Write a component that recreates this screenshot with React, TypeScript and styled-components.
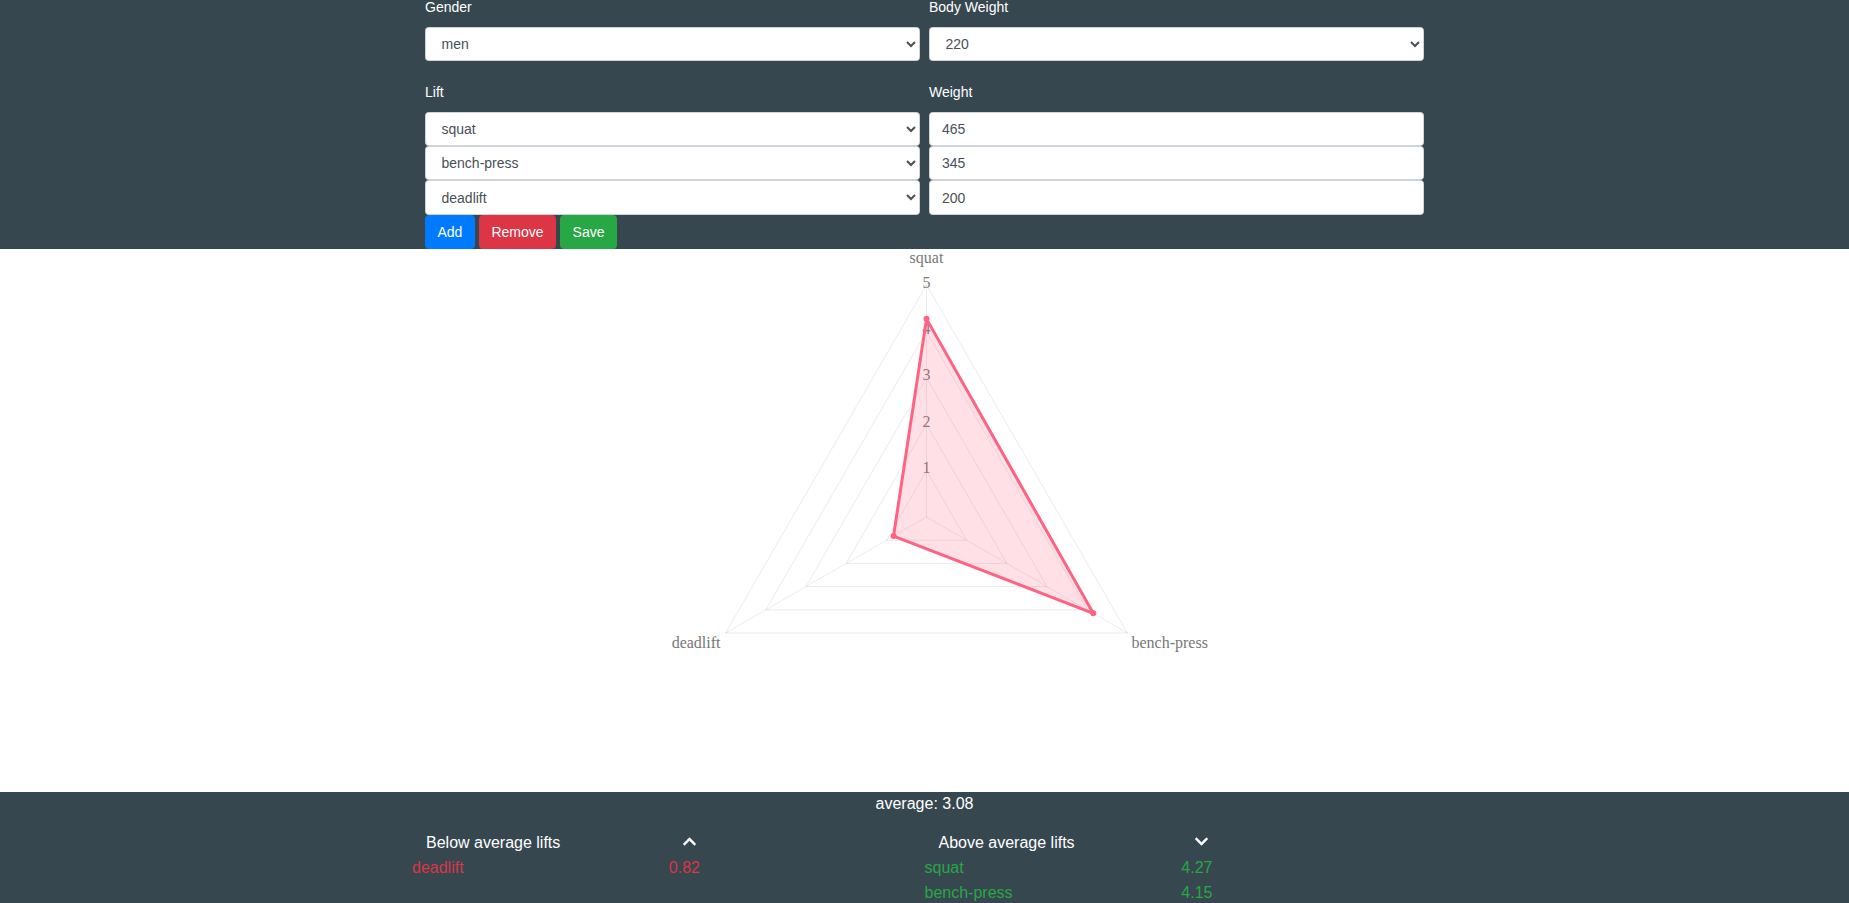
import React from 'react';
import styled, {createGlobalStyle} from 'styled-components';
import {FaChevronUp, FaChevronDown} from 'react-icons/fa';

const LIFTS = [
    {name: 'squat', weight: 465, score: 4.27},
    {name: 'bench-press', weight: 345, score: 4.15},
    {name: 'deadlift', weight: 200, score: 0.82},
];
const AVERAGE = 3.08;

const GlobalStyle = createGlobalStyle`
  html, body {
    margin: 0;
    padding: 0;
    overflow: hidden;
    background: #fff;
  }
  body {
    font-family: "Liberation Sans", Arial, sans-serif;
  }
`;

// radar chart drawn by hand, same look as the chart.js one
const RadarChart: React.FC<{ data: { name: string, score: number }[] }> = ({data}) => {
    const cx = 311.5;
    const cy = 268;
    const r = 232;
    const max = 5;
    const angle = (i: number) => -Math.PI / 2 + (i * 2 * Math.PI) / data.length;
    const at = (i: number, v: number) => {
        const d = (v / max) * r;
        return [cx + Math.cos(angle(i)) * d, cy + Math.sin(angle(i)) * d];
    };
    const ring = (v: number) => data.map((_, i) => at(i, v).join(',')).join(' ');
    const shape = data.map((d, i) => at(i, d.score));

    return (
        <svg width={620} height={543} viewBox="0 0 620 543">
            {[1, 2, 3, 4, 5].map(k => (
                <polygon key={k} points={ring(k)} fill="none" stroke="rgba(0,0,0,0.08)" strokeWidth={1}/>
            ))}
            {data.map((_, i) => {
                const [x, y] = at(i, max);
                return <line key={i} x1={cx} y1={cy} x2={x} y2={y} stroke="rgba(0,0,0,0.08)" strokeWidth={1}/>;
            })}
            {[1, 2, 3, 4, 5].map(k => (
                <text key={k} x={cx} y={cy - (k / max) * r - 3} textAnchor="middle" dominantBaseline="central"
                      fontFamily='"Liberation Serif", serif' fontSize={16} fill="#7a7a7a">{k}</text>
            ))}
            <polygon points={shape.map(p => p.join(',')).join(' ')} fill="rgba(255,99,132,0.2)"
                     stroke="#ff6384" strokeWidth={3} strokeLinejoin="round"/>
            {shape.map(([x, y], i) => <circle key={i} cx={x} cy={y} r={3} fill="#ff6384"/>)}
            <text x={cx} y={cy - r - 28} textAnchor="middle" dominantBaseline="central"
                  fontFamily='"Liberation Serif", serif' fontSize={16} fill="#777">{data[0].name}</text>
            <text x={cx + 205} y={cy + 125.5} textAnchor="start" dominantBaseline="central"
                  fontFamily='"Liberation Serif", serif' fontSize={16} fill="#777">{data[1].name}</text>
            <text x={cx - 206} y={cy + 125.5} textAnchor="end" dominantBaseline="central"
                  fontFamily='"Liberation Serif", serif' fontSize={16} fill="#777">{data[2].name}</text>
        </svg>
    );
}

const App: React.FC = () => {
    const below = LIFTS.filter(l => l.score < AVERAGE);
    const above = LIFTS.filter(l => l.score >= AVERAGE);
    return (
        <>
            <GlobalStyle/>
            <StyledHeader>
                <StyledFormWrapper>
                    <StyledFieldRow $top={-3.5}>
                        <StyledGroup>
                            <StyledLabel>Gender</StyledLabel>
                            <StyledSelect defaultValue="men">
                                <option value="men">men</option>
                                <option value="women">women</option>
                            </StyledSelect>
                        </StyledGroup>
                        <StyledGroup>
                            <StyledLabel>Body Weight</StyledLabel>
                            <StyledSelect defaultValue="220">
                                <option value="220">220</option>
                            </StyledSelect>
                        </StyledGroup>
                    </StyledFieldRow>
                    <StyledFieldRow $top={21}>
                        <StyledGroup>
                            <StyledLabel>Lift</StyledLabel>
                            {LIFTS.map(l => (
                                <StyledSelect key={l.name} defaultValue={l.name}>
                                    {LIFTS.map(o => <option key={o.name} value={o.name}>{o.name}</option>)}
                                </StyledSelect>
                            ))}
                            <StyledButtonBar>
                                <StyledButton $color="#007bff">Add</StyledButton>
                                <StyledButton $color="#dc3545">Remove</StyledButton>
                                <StyledButton $color="#28a745">Save</StyledButton>
                            </StyledButtonBar>
                        </StyledGroup>
                        <StyledGroup>
                            <StyledLabel>Weight</StyledLabel>
                            {LIFTS.map(l => (
                                <StyledInput key={l.name} type="text" defaultValue={l.weight}/>
                            ))}
                        </StyledGroup>
                    </StyledFieldRow>
                </StyledFormWrapper>
            </StyledHeader>

            <StyledChartWrapper>
                <RadarChart data={LIFTS}/>
            </StyledChartWrapper>

            <StyledFooter>
                <StyledAverage>average: {AVERAGE.toFixed(2)}</StyledAverage>
                <StyledLists>
                    <StyledList>
                        <StyledListHeader>
                            <span>Below average lifts</span>
                            <StyledChevron><FaChevronUp size={15}/></StyledChevron>
                        </StyledListHeader>
                        {below.map(l => (
                            <StyledItem key={l.name} $color="#dc3545">
                                <span>{l.name}</span><span>{l.score.toFixed(2)}</span>
                            </StyledItem>
                        ))}
                    </StyledList>
                    <StyledList>
                        <StyledListHeader>
                            <span>Above average lifts</span>
                            <StyledChevron><FaChevronDown size={15}/></StyledChevron>
                        </StyledListHeader>
                        {above.map(l => (
                            <StyledItem key={l.name} $color="#28a745">
                                <span>{l.name}</span><span>{l.score.toFixed(2)}</span>
                            </StyledItem>
                        ))}
                    </StyledList>
                </StyledLists>
            </StyledFooter>
        </>
    );
}

const StyledHeader = styled.div`
  background: #37474f;
  display: grid;
`;

const StyledFormWrapper = styled.form`
  width: 999px;
  margin: 0 auto;
  display: flex;
  flex-direction: column;
`;

const StyledFieldRow = styled.div<{ $top: number }>`
  display: grid;
  grid-template-columns: 1fr 1fr;
  column-gap: 9px;
  margin-top: ${p => p.$top}px;
`;

const StyledGroup = styled.div`
  display: flex;
  flex-direction: column;
`;

const StyledLabel = styled.label`
  font-size: 14px;
  line-height: 21px;
  color: #fff;
  margin-bottom: 9px;
`;

const StyledSelect = styled.select`
  box-sizing: border-box;
  width: 100%;
  height: 34.3px;
  padding: 0 8px 0 11.5px;
  font-family: "Liberation Sans", Arial, sans-serif;
  font-size: 14px;
  color: #495057;
  background: #fff;
  border: 1px solid #ced4da;
  border-radius: 3.5px;
  outline: none;
`;

const StyledInput = styled.input`
  box-sizing: border-box;
  width: 100%;
  height: 34.3px;
  padding: 0 12px;
  font-family: "Liberation Sans", Arial, sans-serif;
  font-size: 14px;
  color: #495057;
  background: #fff;
  border: 1px solid #ced4da;
  border-radius: 3.5px;
  outline: none;
`;

const StyledButtonBar = styled.div`
  display: flex;
  gap: 4px;
`;

const StyledButton = styled.button<{ $color: string }>`
  height: 34.5px;
  padding: 0 11.5px;
  font-family: "Liberation Sans", Arial, sans-serif;
  font-size: 14px;
  color: #fff;
  background: ${p => p.$color};
  border: 1px solid ${p => p.$color};
  border-radius: 3.5px;
`;

const StyledChartWrapper = styled.div`
  height: 543px;
  display: flex;
  justify-content: center;
  background: #fff;
`;

const StyledFooter = styled.div`
  background: #37474f;
  color: #fff;
  font-size: 16px;
  padding-bottom: 20px;
`;

const StyledAverage = styled.div`
  text-align: center;
  line-height: 24px;
`;

const StyledLists = styled.div`
  width: 1025px;
  margin: 14px auto 0;
  display: grid;
  grid-template-columns: 1fr 1fr;
`;

const StyledList = styled.div`
  width: 288px;
`;

const StyledListHeader = styled.div`
  display: flex;
  justify-content: space-between;
  align-items: center;
  height: 25px;
  padding: 0 3.5px 0 14px;
`;

const StyledChevron = styled.span`
  display: flex;
  margin-bottom: 2px;
`;

const StyledItem = styled.div<{ $color: string }>`
  display: flex;
  justify-content: space-between;
  line-height: 25px;
  color: ${p => p.$color};
`;

export default App;
